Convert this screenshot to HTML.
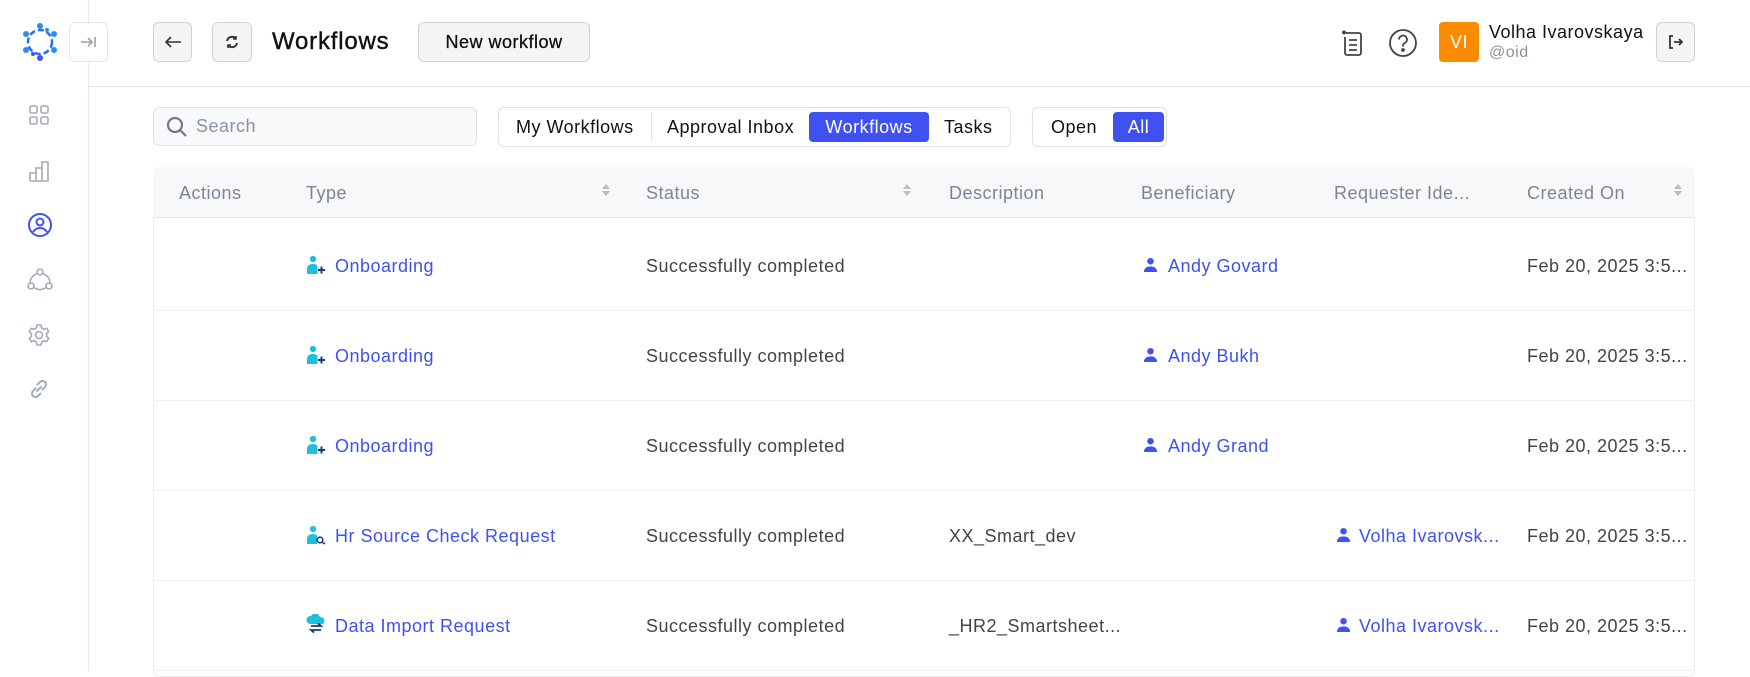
<!DOCTYPE html>
<html><head><meta charset="utf-8">
<style>
*{box-sizing:border-box;margin:0;padding:0}
body{width:1750px;height:671px;overflow:hidden;background:#fff;font-family:"Liberation Sans",Arial,sans-serif;color:#1f2937;position:relative;letter-spacing:0.5px}
.abs{position:absolute}
.side{left:0;top:0;width:89px;height:671px;border-right:1px solid #e8e9ee;background:#fff}
.btn{position:absolute;border:1px solid #cfd2d8;border-radius:6px;background:#f4f5f7;display:flex;align-items:center;justify-content:center}
.hline{left:89px;top:86px;width:1661px;height:1px;background:#e8e9ee}
.tab{position:absolute;top:112px;height:30px;line-height:30px;font-size:18px;color:#111;padding:0 14px}
.th{position:absolute;top:168px;height:50px;line-height:50px;font-size:18px;color:#7d8593}
.cell{position:absolute;font-size:18px;line-height:20px;color:#444}
.link{color:#3f51f0}
.sort{position:absolute;top:183px;width:8px}
.rowline{position:absolute;left:153px;width:1542px;height:1px;background:#eceef1}
</style></head><body>
<div class="abs side"></div>
<svg class="abs" style="left:20px;top:22px" width="40" height="40" viewBox="0 0 40 40">
<g fill="none" stroke="#2f6cf0" stroke-width="2.5">
<circle cx="20" cy="20" r="12" stroke-dasharray="6 3"/>
</g>
<g fill="#2a8ef0"><circle cx="20" cy="4" r="3"/><circle cx="34" cy="12" r="3"/><circle cx="34" cy="28" r="3"/><circle cx="20" cy="36" r="3" fill="#3f51f0"/><circle cx="6" cy="28" r="3"/><circle cx="6" cy="12" r="3"/><circle cx="27" cy="8" r="2"/><circle cx="13" cy="32" r="2" fill="#3f51f0"/></g>
</svg>
<div class="btn" style="left:69px;top:22px;width:39px;height:40px;background:#fff;border-color:#e4e6ea">
<svg width="18" height="14" viewBox="0 0 18 14" fill="none" stroke="#9aa1ad" stroke-width="1.6"><path d="M1 7h11M8 3l4 4-4 4M15 2v10"/></svg></div>
<svg class="abs" style="left:28px;top:104px" width="22" height="22" viewBox="0 0 22 22" fill="none" stroke="#a3abb8" stroke-width="1.6"><rect x="2" y="2" width="7" height="7" rx="1.5"/><rect x="13" y="2" width="7" height="7" rx="1.5"/><rect x="2" y="13" width="7" height="7" rx="1.5"/><rect x="13" y="13" width="7" height="7" rx="1.5"/></svg>
<svg class="abs" style="left:28px;top:159px" width="24" height="24" viewBox="0 0 24 24" fill="none" stroke="#a3abb8" stroke-width="1.6"><path d="M2 22V14h6v8M8 22V9h6v13M14 22V3h6v19H2"/></svg>
<svg class="abs" style="left:27px;top:212px" width="26" height="26" viewBox="0 0 26 26" fill="none" stroke="#3f51f0" stroke-width="2"><circle cx="13" cy="13" r="11"/><circle cx="13" cy="10" r="3.5"/><path d="M6 20c2-3 4-4 7-4s5 1 7 4"/></svg>
<svg class="abs" style="left:27px;top:268px" width="26" height="24" viewBox="0 0 26 24" fill="none" stroke="#a3abb8" stroke-width="1.6"><circle cx="13" cy="4" r="3"/><circle cx="4" cy="18" r="3"/><circle cx="22" cy="18" r="3"/><path d="M10.5 5.5A10 10 0 0 0 3 15M15.5 5.5A10 10 0 0 1 23 15M7 19.5a10 10 0 0 0 12 0"/></svg>
<svg class="abs" style="left:27px;top:323px" width="24" height="24" viewBox="0 0 24 24" fill="none" stroke="#a3abb8" stroke-width="1.6"><circle cx="12" cy="12" r="3.5"/><path d="M10 2h4l.6 2.8 2.4 1.4 2.7-.9 2 3.4-2.1 1.9v2.8l2.1 1.9-2 3.4-2.7-.9-2.4 1.4L14 22h-4l-.6-2.8-2.4-1.4-2.7.9-2-3.4 2.1-1.9v-2.8L2.3 8.7l2-3.4 2.7.9 2.4-1.4z"/></svg>
<svg class="abs" style="left:27px;top:377px" width="24" height="24" viewBox="0 0 24 24" fill="none" stroke="#a3abb8" stroke-width="2" stroke-linecap="round"><path d="M10 14l4-4M8.5 11.5l-2.5 2.5a3.5 3.5 0 0 0 5 5l2.5-2.5M15.5 12.5l2.5-2.5a3.5 3.5 0 0 0-5-5l-2.5 2.5"/></svg>
<div class="abs hline"></div>
<div class="btn" style="left:153px;top:22px;width:39px;height:40px"><svg width="18" height="14" viewBox="0 0 18 14" fill="none" stroke="#333" stroke-width="1.6"><path d="M17 7H2M7 2L2 7l5 5"/></svg></div>
<div class="btn" style="left:212px;top:22px;width:40px;height:40px"><svg width="16" height="16" viewBox="0 0 16 16" fill="none" stroke="#333" stroke-width="2"><path d="M3 7a5 5 0 0 1 9-2M13 9a5 5 0 0 1-9 2"/><path d="M12 2v3H9M4 14v-3h3" stroke-width="1.6"/></svg></div>
<div class="abs" style="left:272px;top:28px;font-size:24px;color:#111;line-height:28px;letter-spacing:0.8px;-webkit-text-stroke:0.4px #111">Workflows</div>
<div class="btn" style="left:418px;top:22px;width:172px;height:40px;font-size:18px;color:#111;letter-spacing:0.5px;-webkit-text-stroke:0.3px #111">New workflow</div>
<svg class="abs" style="left:1340px;top:29px" width="26" height="28" viewBox="0 0 26 28" fill="none" stroke="#444" stroke-width="1.8"><circle cx="4" cy="3.5" r="2" fill="#444" stroke="none"/><path d="M6 4h13a2 2 0 0 1 2 2v18a2 2 0 0 1-2 2H7a2 2 0 0 1-2-2V8M9 11h8M9 16h8M9 21h8"/></svg>
<svg class="abs" style="left:1388px;top:28px" width="30" height="30" viewBox="0 0 30 30" fill="none" stroke="#444" stroke-width="1.8"><circle cx="15" cy="15" r="13"/><path d="M11 11.5a4 4 0 1 1 5.5 3.7c-1 .5-1.5 1.2-1.5 2.3v1"/><circle cx="15" cy="22" r="1" fill="#444"/></svg>
<div class="abs" style="left:1439px;top:22px;width:40px;height:40px;background:#fb8c00;border-radius:4px;color:#fff;font-size:18px;line-height:40px;text-align:center">VI</div>
<div class="abs" style="left:1489px;top:22px;font-size:18px;color:#111;line-height:20px">Volha Ivarovskaya</div>
<div class="abs" style="left:1489px;top:44px;font-size:16px;color:#8a93a0;line-height:18px">@oid</div>
<div class="btn" style="left:1656px;top:22px;width:39px;height:40px"><svg width="16" height="14" viewBox="0 0 16 14" fill="none" stroke="#333" stroke-width="1.8"><path d="M5 1H2v12h3M6 7h8M11 4l3 3-3 3"/></svg></div>
<div class="abs" style="left:153px;top:107px;width:324px;height:39px;border:1px solid #dfe1e6;border-radius:6px;background:#f8f9fa"></div>
<svg class="abs" style="left:166px;top:116px" width="22" height="22" viewBox="0 0 22 22" fill="none" stroke="#707985" stroke-width="2.2"><circle cx="9" cy="9" r="7"/><path d="M14 14l6 6"/></svg>
<div class="abs" style="left:196px;top:116px;font-size:18px;color:#8a93a0;line-height:21px">Search</div>
<div class="abs" style="left:498px;top:107px;width:513px;height:40px;border:1px solid #dfe1e6;border-radius:6px"></div>
<div class="tab" style="left:502px">My Workflows</div>
<div class="abs" style="left:651px;top:112px;width:1px;height:30px;background:#e2e4e8"></div>
<div class="tab" style="left:653px">Approval Inbox</div>
<div class="tab" style="left:809px;width:120px;background:#3f51f0;color:#fff;border-radius:4px;text-align:center;padding:0">Workflows</div>
<div class="tab" style="left:930px">Tasks</div>
<div class="abs" style="left:1032px;top:107px;width:135px;height:40px;border:1px solid #dfe1e6;border-radius:6px"></div>
<div class="tab" style="left:1037px">Open</div>
<div class="tab" style="left:1113px;width:51px;background:#3f51f0;color:#fff;border-radius:4px;text-align:center;padding:0">All</div>
<div class="abs" style="left:153px;top:167px;width:1542px;height:510px;border:1px solid #eceef1;border-radius:6px"></div>
<div class="abs" style="left:153px;top:167px;width:1542px;height:51px;background:#f7f8fa;border-bottom:1px solid #e6e8ec;border-radius:6px 6px 0 0"></div>
<div class="th" style="left:179px">Actions</div>
<div class="th" style="left:306px">Type</div>
<div class="th" style="left:646px">Status</div>
<div class="th" style="left:949px">Description</div>
<div class="th" style="left:1141px">Beneficiary</div>
<div class="th" style="left:1334px">Requester Ide...</div>
<div class="th" style="left:1527px">Created On</div>
<svg class="sort" style="left:602px" height="14" viewBox="0 0 8 14" fill="#b8bdc6"><path d="M4 1l4 5H0zM4 13L0 8h8z"/></svg>
<svg class="sort" style="left:903px" height="14" viewBox="0 0 8 14" fill="#b8bdc6"><path d="M4 1l4 5H0zM4 13L0 8h8z"/></svg>
<svg class="sort" style="left:1674px" height="14" viewBox="0 0 8 14" fill="#b8bdc6"><path d="M4 1l4 5H0zM4 13L0 8h8z"/></svg>
<div class="rowline" style="top:310px"></div>
<div class="rowline" style="top:400px"></div>
<div class="rowline" style="top:490px"></div>
<div class="rowline" style="top:580px"></div>
<div class="rowline" style="top:670px"></div>
<svg style="display:none"><defs>
<symbol id="onb" viewBox="0 0 20 20"><circle cx="7" cy="4" r="3.2" fill="#1ec0dc"/><path d="M1 19v-5c0-3 2-5 6-5 2 0 3.5.6 4.5 1.6V19z" fill="#1ec0dc"/><path d="M12 15h7M15.5 11.5v7" stroke="#1d3a7a" stroke-width="2"/></symbol>
<symbol id="hr" viewBox="0 0 20 20"><circle cx="7" cy="4" r="3.2" fill="#1ec0dc"/><path d="M1 19v-5c0-3 2-5 6-5 2 0 3 .5 4 1.3V19z" fill="#1ec0dc"/><circle cx="14" cy="15" r="2.8" fill="#fff" stroke="#1d3a7a" stroke-width="1.6"/><path d="M16 17l3 2" stroke="#1d3a7a" stroke-width="1.6"/></symbol>
<symbol id="di" viewBox="0 0 20 20"><path d="M4 10a4 4 0 0 1 1-8 5 5 0 0 1 9 1 4 4 0 0 1 3 7z" fill="#1ec0dc"/><path d="M5 12h10l-3-2.5M15 16H5l3 2.5" stroke="#1d3a7a" stroke-width="1.8" fill="none"/></symbol>
<symbol id="usr" viewBox="0 0 16 16"><circle cx="8" cy="4.5" r="3.5" fill="#3f51f0"/><path d="M1 16c0-4 3-6 7-6s7 2 7 6z" fill="#3f51f0"/></symbol>
</defs></svg>
<svg class="abs" style="left:306px;top:255px" width="20" height="20"><use href="#onb"/></svg>
<div class="cell link" style="left:335px;top:256px">Onboarding</div>
<div class="cell" style="left:646px;top:256px">Successfully completed</div>
<svg class="abs" style="left:1143px;top:257px" width="15" height="15"><use href="#usr"/></svg>
<div class="cell link" style="left:1168px;top:256px">Andy Govard</div>
<div class="cell" style="left:1527px;top:256px">Feb 20, 2025 3:5...</div>
<svg class="abs" style="left:306px;top:345px" width="20" height="20"><use href="#onb"/></svg>
<div class="cell link" style="left:335px;top:346px">Onboarding</div>
<div class="cell" style="left:646px;top:346px">Successfully completed</div>
<svg class="abs" style="left:1143px;top:347px" width="15" height="15"><use href="#usr"/></svg>
<div class="cell link" style="left:1168px;top:346px">Andy Bukh</div>
<div class="cell" style="left:1527px;top:346px">Feb 20, 2025 3:5...</div>
<svg class="abs" style="left:306px;top:435px" width="20" height="20"><use href="#onb"/></svg>
<div class="cell link" style="left:335px;top:436px">Onboarding</div>
<div class="cell" style="left:646px;top:436px">Successfully completed</div>
<svg class="abs" style="left:1143px;top:437px" width="15" height="15"><use href="#usr"/></svg>
<div class="cell link" style="left:1168px;top:436px">Andy Grand</div>
<div class="cell" style="left:1527px;top:436px">Feb 20, 2025 3:5...</div>
<svg class="abs" style="left:306px;top:525px" width="20" height="20"><use href="#hr"/></svg>
<div class="cell link" style="left:335px;top:526px">Hr Source Check Request</div>
<div class="cell" style="left:646px;top:526px">Successfully completed</div>
<div class="cell" style="left:949px;top:526px">XX_Smart_dev</div>
<svg class="abs" style="left:1336px;top:527px" width="15" height="15"><use href="#usr"/></svg>
<div class="cell link" style="left:1359px;top:526px">Volha Ivarovsk...</div>
<div class="cell" style="left:1527px;top:526px">Feb 20, 2025 3:5...</div>
<svg class="abs" style="left:306px;top:614px" width="20" height="20"><use href="#di"/></svg>
<div class="cell link" style="left:335px;top:616px">Data Import Request</div>
<div class="cell" style="left:646px;top:616px">Successfully completed</div>
<div class="cell" style="left:949px;top:616px">_HR2_Smartsheet...</div>
<svg class="abs" style="left:1336px;top:617px" width="15" height="15"><use href="#usr"/></svg>
<div class="cell link" style="left:1359px;top:616px">Volha Ivarovsk...</div>
<div class="cell" style="left:1527px;top:616px">Feb 20, 2025 3:5...</div>
</body></html>
